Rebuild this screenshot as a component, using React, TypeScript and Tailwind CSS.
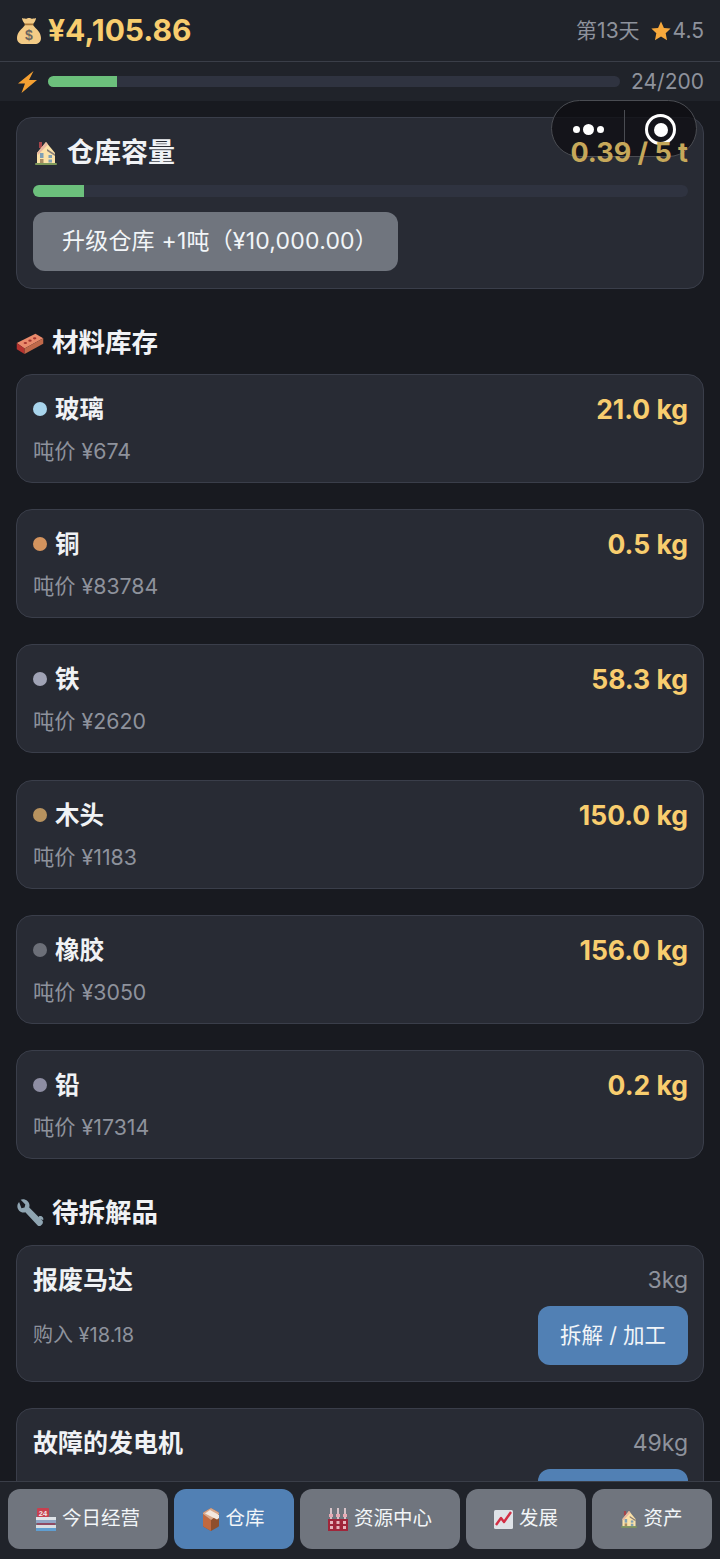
import React from "react";

const FONT = "font-['Inter','Noto_Sans_CJK_SC',sans-serif]";

const MoneyBag = () => (
  <svg width="24" height="26" viewBox="0 0 24 26">
    <path d="M8 7C5 11 0 14 0 20c0 4 3 6 6 6h12c3 0 6-2 6-6 0-6-5-9-8-13z" fill="#f3cb86" />
    <path d="M5 0c2 1 3 0 4 1 1-1 2-1 3-1s2 0 3 1c1-1 2 0 4-1 0 2-2 5-3 6H8C7 5 5 2 5 0z" fill="#f3cb86" />
    <rect x="7.5" y="5.6" width="9" height="1.6" rx=".8" fill="#a9783a" />
    <text x="12" y="22" textAnchor="middle" fontSize="14" fontWeight="700" fill="#6a6460" fontFamily="Liberation Sans">$</text>
  </svg>
);
const Zap = () => (
  <svg width="20" height="22" viewBox="0 0 20 22">
    <path d="M16.5 0 1 12.5h7L4.5 22 20 9h-8z" fill="#f5a032" />
  </svg>
);
const House = ({ w = 22, h = 24 }: { w?: number; h?: number }) => (
  <svg width={w} height={h} viewBox="0 0 22 24">
    <rect x="4" y="1" width="3" height="6" fill="#a5454b" />
    <path d="M2 22V12L11 1l9 11v10z" fill="#fce2a8" />
    <path d="M2 12 11 1l2 2.5L3 14z" fill="#e9b9a0" />
    <path d="M12 8l8 5v2l-8-5z" fill="#8a7f78" />
    <rect x="5" y="12" width="3.5" height="5" fill="#7fa0b5" />
    <rect x="13.5" y="14" width="3.5" height="3" fill="#7fa0b5" />
    <rect x="5" y="18" width="3.5" height="4" fill="#a88b62" />
    <rect x="13.5" y="18.5" width="3.5" height="3" fill="#7fa0b5" />
    <rect x="0" y="22" width="22" height="2" rx="1" fill="#7f9a5a" />
  </svg>
);
const Brick = () => (
  <svg width="28" height="28" viewBox="0 0 36 36">
    <path d="M1 18 25 6l10 6-24 13z" fill="#e98a6b" />
    <path d="M1 18l10 7v7L1 26z" fill="#b5322f" />
    <path d="M11 25 35 12v7L11 32z" fill="#c0694a" />
    <ellipse cx="12" cy="18" rx="2.2" ry="1.4" fill="#a5342f" />
    <ellipse cx="18" cy="15" rx="2.2" ry="1.4" fill="#a5342f" />
    <ellipse cx="24" cy="12" rx="2.2" ry="1.4" fill="#a5342f" />
  </svg>
);
const Wrench = () => (
  <svg width="28" height="28" viewBox="0 0 36 36">
    <path d="M4 4c-3 3-3 8 0 11 2 2 5 3 8 2l15 16c1 2 4 2 5 1l2-2c1-2 1-4-1-5L17 11c1-3 0-6-2-8-3-3-7-3-9-2l6 6-1 4-4 1z" fill="#8fa5b2" />
    <path d="M30 22c3-1 6 2 5 5l-4-1-2 3 2 3c-3 1-5-1-6-3z" fill="#8fa5b2" />
  </svg>
);
const Calendar = () => (
  <svg width="20" height="23" viewBox="0 0 20 23">
    <rect x="1" y="0" width="12" height="9" rx="1" fill="#c8404f" />
    <text x="7" y="7.5" textAnchor="middle" fontSize="7.5" fontWeight="700" fill="#f2e6e6" fontFamily="Liberation Sans">24</text>
    <rect x="0" y="9" width="20" height="3" fill="#dfe3e8" />
    <rect x="0" y="12" width="20" height="3" fill="#8fa5c4" />
    <rect x="1" y="15" width="18" height="2" fill="#8f4a63" />
    <rect x="0" y="17" width="20" height="3" fill="#d9dde2" />
    <rect x="0" y="20" width="20" height="3" fill="#5f9ed1" />
  </svg>
);
const Box = () => (
  <svg width="16" height="23" viewBox="0 0 16 23">
    <path d="M8 0l7 4a2 2 0 0 1 1 2v11a2 2 0 0 1-1 2l-7 4-7-4a2 2 0 0 1-1-2V6a2 2 0 0 1 1-2z" fill="#8f4f2c" />
    <path d="M0 6v11a2 2 0 0 0 1 2l7 4V12z" fill="#c1693f" />
    <path d="M8 0l7 4a2 2 0 0 1 1 2l-8 6-8-6a2 2 0 0 1 1-2z" fill="#d9a88a" />
    <path d="M2 5.5 7 2l9 5v3l-2 1.5z" fill="#f3e8de" />
  </svg>
);
const Factory = () => (
  <svg width="20" height="23" viewBox="0 0 20 23">
    <g fill="#d7c3c8">
      <rect x="2" y="0" width="2" height="12" />
      <rect x="9" y="0" width="2" height="12" />
      <rect x="16" y="0" width="2" height="12" />
    </g>
    <g fill="#e7aab4">
      <rect x="1" y="6" width="4" height="3" />
      <rect x="8" y="6" width="4" height="3" />
      <rect x="15" y="6" width="4" height="3" />
    </g>
    <rect x="0" y="11" width="20" height="12" fill="#a0263a" />
    <g fill="#e6b5bc">
      <rect x="2" y="13" width="3" height="3" /><rect x="8.5" y="13" width="3" height="3" /><rect x="15" y="13" width="3" height="3" />
      <rect x="2" y="18" width="3" height="3" /><rect x="8.5" y="18" width="3" height="3" /><rect x="15" y="18" width="3" height="3" />
    </g>
  </svg>
);
const Chart = () => (
  <svg width="19" height="19" viewBox="0 0 19 19">
    <rect width="19" height="19" rx="1.5" fill="#dfe3e8" />
    <path d="M2 15 7 8l3 4 7-10" fill="none" stroke="#d32f45" strokeWidth="2.4" strokeLinejoin="round" />
  </svg>
);
const Star = () => (
  <svg width="22" height="22" viewBox="0 0 24 24">
    <path d="M12 1.5l3.2 7.1 7.3.8-5.4 5.1 1.5 7.5-6.6-3.9-6.6 3.9 1.5-7.5-5.4-5.1 7.3-.8z" fill="#f8a93c" />
  </svg>
);

const materials = [
  { name: "玻璃", dot: "bg-[#a8d4ec]", qty: "21.0 kg", price: "吨价 ¥674" },
  { name: "铜", dot: "bg-[#d4945e]", qty: "0.5 kg", price: "吨价 ¥83784" },
  { name: "铁", dot: "bg-[#a0a3b5]", qty: "58.3 kg", price: "吨价 ¥2620" },
  { name: "木头", dot: "bg-[#b8935f]", qty: "150.0 kg", price: "吨价 ¥1183" },
  { name: "橡胶", dot: "bg-[#6c6f78]", qty: "156.0 kg", price: "吨价 ¥3050" },
  { name: "铅", dot: "bg-[#8e8ea3]", qty: "0.2 kg", price: "吨价 ¥17314" },
];

const cardCls = "rounded-2xl border border-[#3a3e4a] bg-[#282b34]";

const Material = ({ m }: { m: (typeof materials)[number] }) => (
  <div className={`${cardCls} h-[109px] shrink-0 pt-[18px] pr-[15px] pl-4`}>
    <div className="flex h-[32px] items-center justify-between">
      <div className="flex items-center gap-2">
        <span className={`h-[14px] w-[14px] rounded-full ${m.dot}`} />
        <span className="text-[24.5px] leading-8 font-bold text-[#f0f2f5]">{m.name}</span>
      </div>
      <span className="text-[26.5px] leading-8 font-bold text-[#f8cd6e]">{m.qty}</span>
    </div>
    <div className="mt-[10px] text-[21.3px] leading-8 text-[#8e929c]">{m.price}</div>
  </div>
);

const SalvageItem = ({ name, weight, price, action }: { name: string; weight: string; price?: string; action?: string }) => (
  <div className={`${cardCls} shrink-0 pt-[16px] pr-[15px] pb-[16px] pl-4`}>
    <div className="flex h-[36px] items-center justify-between">
      <span className="text-[25px] leading-8 font-bold text-[#f0f2f5]">{name}</span>
      <span className="text-[23px] leading-8 text-[#8e929c]">{weight}</span>
    </div>
    <div className="mt-[8px] flex items-center justify-between">
      <span className="text-[20px] leading-8 text-[#8e929c]">{price}</span>
      <button className="h-[59px] w-[150px] rounded-xl bg-[#5180b4] text-[21.5px] text-[#f2f5f8]">{action}</button>
    </div>
  </div>
);

const tabs = [
  { label: "今日经营", icon: <Calendar />, w: "w-[160px]", active: false },
  { label: "仓库", icon: <Box />, w: "w-[120px]", active: true },
  { label: "资源中心", icon: <Factory />, w: "w-[160px]", active: false },
  { label: "发展", icon: <Chart />, w: "w-[120px]", active: false },
  { label: "资产", icon: <House w={16} h={18} />, w: "w-[120px]", active: false },
];

export default function App() {
  return (
    <div className={`relative flex h-[1559px] w-[720px] flex-col overflow-hidden bg-[#181a20] ${FONT}`}>
      <header className="flex h-[62px] shrink-0 items-center justify-between border-b border-[#3a3e48] bg-[#20232a] pr-4 pl-[17px]">
        <div className="flex items-center gap-[7px]">
          <MoneyBag />
          <span className="text-[30px] font-bold text-[#f8cd6e]">¥4,105.86</span>
        </div>
        <div className="flex items-center text-[21px] text-[#8e929c]">
          <span>第13天</span>
          <span className="ml-[10px]"><Star /></span>
          <span className="ml-[1px]">4.5</span>
        </div>
      </header>
      <div className="flex h-[39px] shrink-0 items-center bg-[#20232a] pr-4 pl-[17px]">
        <Zap />
        <div className="ml-[11px] h-[11px] flex-1 overflow-hidden rounded-full bg-[#2f3340]">
          <div className="h-full w-[12%] bg-[#6cc07c]" />
        </div>
        <span className="ml-[11px] text-[21px] text-[#8e929c]">24/200</span>
      </div>

      <main className="flex min-h-0 flex-1 flex-col overflow-hidden px-4 pt-4">
        <section className={`${cardCls} h-[172px] shrink-0 pt-[16px] pr-[15px] pl-4`}>
          <div className="flex h-[38px] items-center justify-between">
            <div className="flex items-center gap-[10px] pl-[2px]">
              <House />
              <span className="text-[27px] font-bold text-[#f0f2f5]">仓库容量</span>
            </div>
            <span className="relative z-10 text-[27px] font-bold text-[#c6a85a]">0.39 / 5 t</span>
          </div>
          <div className="mt-[13px] h-[12px] overflow-hidden rounded-full bg-[#2f3340]">
            <div className="h-full w-[7.8%] bg-[#6cc07c]" />
          </div>
          <button className="mt-[15px] h-[59px] w-[365px] rounded-xl bg-[#70757e] pl-[29px] text-left text-[23px] tracking-[0.2px] text-[#f2f5f8]">
            升级仓库 +1吨（¥10,000.00）
          </button>
        </section>

        <h2 className="mt-[36px] flex h-[36px] shrink-0 items-center gap-2 text-[26.5px] font-bold text-[#f0f2f5]">
          <Brick />
          材料库存
        </h2>
        <div className="mt-[13px] flex shrink-0 flex-col gap-[26.2px]">
          {materials.map((m) => (
            <Material key={m.name} m={m} />
          ))}
        </div>

        <h2 className="mt-[36px] flex h-[36px] shrink-0 items-center gap-2 text-[26.5px] font-bold text-[#f0f2f5]">
          <Wrench />
          待拆解品
        </h2>
        <div className="mt-[14px] flex shrink-0 flex-col gap-[26px]">
          <SalvageItem name="报废马达" weight="3kg" price="购入 ¥18.18" action="拆解 / 加工" />
          <SalvageItem name="故障的发电机" weight="49kg" />
        </div>
      </main>

      <nav className="flex h-[78px] shrink-0 gap-[6px] border-t border-[#3a3e48] bg-[#20232a] px-2 pt-[7px]">
        {tabs.map((t) => (
          <button
            key={t.label}
            className={`flex h-[60px] ${t.w} items-center justify-center gap-[6px] rounded-xl text-[19.5px] text-[#f2f5f8] ${t.active ? "bg-[#5180b4]" : "bg-[#70757e]"}`}
          >
            {t.icon}
            <span>{t.label}</span>
          </button>
        ))}
      </nav>

      <div className="absolute top-[100px] left-[551px] flex h-[57px] w-[146px] items-start rounded-full border border-[#4a4c52] bg-[#0d0e11]/75">
        <div className="mt-[23px] flex w-[72px] items-center justify-center gap-[3px]">
          <span className="h-[7px] w-[7px] rounded-full bg-white" />
          <span className="h-[11px] w-[11px] rounded-full bg-white" />
          <span className="h-[7px] w-[7px] rounded-full bg-white" />
        </div>
        <div className="mt-[9px] h-[37px] w-px bg-[#4a4c52]" />
        <div className="mt-[13px] flex flex-1 justify-center">
          <span className="flex h-[31px] w-[31px] items-center justify-center rounded-full border-[3px] border-white">
            <span className="h-[14px] w-[14px] rounded-full bg-white" />
          </span>
        </div>
      </div>
    </div>
  );
}
